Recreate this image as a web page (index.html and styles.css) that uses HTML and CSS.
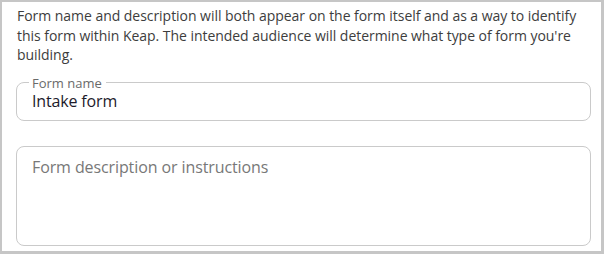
FILE: index.html
```html
<!DOCTYPE html>
<html>
<head>
<meta charset="utf-8">
<link rel="stylesheet" href="styles.css">
</head>
<body>
<div class="frame">
  <p class="intro">Form name and description will both appear on the form itself and as a way to identify this form within Keap. The intended audience will determine what type of form you're building.</p>
  <fieldset class="field">
    <legend class="field-label">Form name</legend>
    <div class="field-value">Intake form</div>
  </fieldset>
  <div class="textarea">
    <span class="placeholder">Form description or instructions</span>
  </div>
</div>
</body>
</html>
```
FILE: styles.css
```css
html, body {
  margin: 0;
  padding: 0;
  background: #c6c6c6;
  width: 604px;
  height: 254px;
  overflow: hidden;
}
.frame {
  box-sizing: border-box;
  margin: 2px 3px 0 2px;
  height: 249px;
  background: #fff;
  padding: 4px 10px 0 14px;
  font-family: "Open Sans", "Liberation Sans", sans-serif;
  color: #3d3d3d;
}
.intro {
  margin: 0 0 0 1px;
  font-size: 14px;
  line-height: 19.5px;
  letter-spacing: -0.04px;
}
.field {
  margin: 11px 0 0 0;
  padding: 0 15px 9px 15px;
  border: 1px solid #cacaca;
  border-radius: 8px;
  min-width: 0;
}
.field-label {
  padding: 0 4px 0 3px;
  margin-left: -3px;
  font-size: 13px;
  line-height: 14px;
  color: #6a6a6a;
}
.field-value {
  padding-top: 1.5px;
  font-size: 16px;
  line-height: 20px;
  letter-spacing: -0.15px;
  color: #1d1b2b;
}
.textarea {
  margin-top: 25px;
  box-sizing: border-box;
  height: 100px;
  border: 1px solid #cacaca;
  border-radius: 8px;
  padding: 9px 15px;
}
.placeholder {
  font-size: 16px;
  line-height: 22px;
  letter-spacing: -0.1px;
  color: #787878;
}
```
